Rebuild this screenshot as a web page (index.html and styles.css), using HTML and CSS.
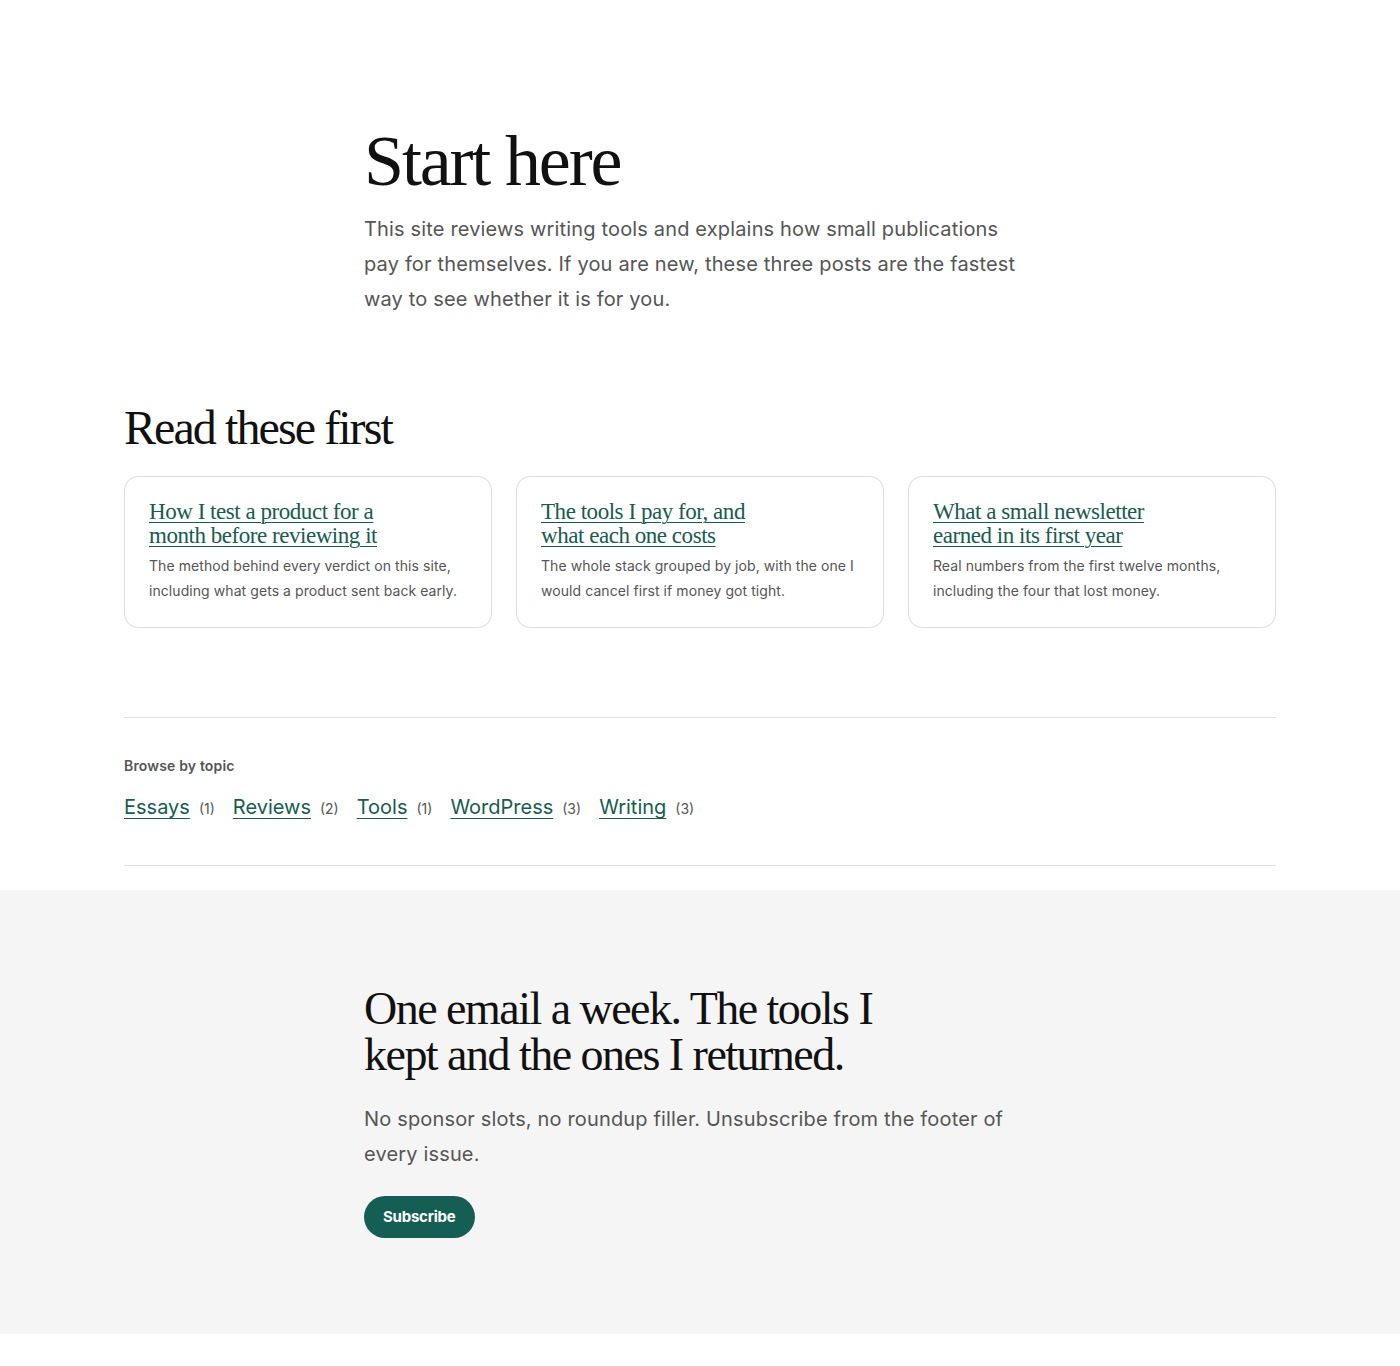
FILE: index.html
```html
<!DOCTYPE html>
<html lang="en">
<head>
<meta charset="utf-8">
<title>Start here</title>
<link rel="stylesheet" href="styles.css">
</head>
<body>
<main>
  <section class="hero">
    <h1 class="hero-title">Start here</h1>
    <p class="lead">This site reviews writing tools and explains how small publications pay for themselves. If you are new, these three posts are the fastest way to see whether it is for you.</p>
  </section>

  <section class="first">
    <h2 class="section-title">Read these first</h2>
    <div class="cards">
      <article class="card">
        <h3 class="card-title"><a href="#">How I test a product for a month before reviewing it</a></h3>
        <p class="card-text">The method behind every verdict on this site, including what gets a product sent back early.</p>
      </article>
      <article class="card">
        <h3 class="card-title"><a href="#">The tools I pay for, and what each one costs</a></h3>
        <p class="card-text">The whole stack grouped by job, with the one I would cancel first if money got tight.</p>
      </article>
      <article class="card">
        <h3 class="card-title"><a href="#">What a small newsletter earned in its first year</a></h3>
        <p class="card-text">Real numbers from the first twelve months, including the four that lost money.</p>
      </article>
    </div>
  </section>

  <section class="topics">
    <h2 class="topics-label">Browse by topic</h2>
    <ul class="topic-list">
      <li><a href="#">Essays</a><span class="count">(1)</span></li>
      <li><a href="#">Reviews</a><span class="count">(2)</span></li>
      <li><a href="#">Tools</a><span class="count">(1)</span></li>
      <li><a href="#">WordPress</a><span class="count">(3)</span></li>
      <li><a href="#">Writing</a><span class="count">(3)</span></li>
    </ul>
  </section>

  <section class="newsletter">
    <div class="newsletter-inner">
      <h2 class="newsletter-title">One email a week. The tools I kept and the ones I returned.</h2>
      <p class="lead">No sponsor slots, no roundup filler. Unsubscribe from the footer of every issue.</p>
      <a class="button" href="#">Subscribe</a>
    </div>
  </section>
</main>
</body>
</html>
```

FILE: styles.css
```css
* { box-sizing: border-box; }

html, body {
  margin: 0;
  padding: 0;
  background: #ffffff;
}

body {
  font-family: Inter, "Noto Sans", "Liberation Sans", sans-serif;
  color: #111111;
  letter-spacing: 0.01em;
  padding-bottom: 32px;
}

a { color: #175c4f; }

.hero {
  width: 672px;
  margin: 0 auto;
  padding-top: 121px;
}

.hero-title {
  font-family: "Liberation Serif", "DejaVu Serif", serif;
  font-weight: 400;
  font-size: 72px;
  line-height: 80px;
  letter-spacing: -0.03em;
  margin: 0 0 11px;
  color: #111111;
}

.lead {
  font-size: 20px;
  line-height: 35px;
  color: #555555;
  margin: 0;
}

.first {
  width: 1152px;
  margin: 0 auto;
  padding-top: 87px;
}

.section-title {
  font-family: "Liberation Serif", "DejaVu Serif", serif;
  font-weight: 400;
  font-size: 48px;
  line-height: 48px;
  letter-spacing: -0.04em;
  margin: 0 0 24px;
  color: #111111;
}

.cards {
  display: grid;
  grid-template-columns: repeat(3, 1fr);
  gap: 24px;
}

.card {
  border: 1px solid #dcdcdc;
  border-radius: 14px;
  padding: 23px 24px 24px;
}

.card-title {
  font-family: "Liberation Serif", "DejaVu Serif", serif;
  font-weight: 400;
  font-size: 23px;
  line-height: 24px;
  letter-spacing: -0.02em;
  margin: 0 0 5px;
  max-width: 250px;
  text-wrap: balance;
}

.card-title a {
  text-decoration-thickness: 1px;
  text-underline-offset: 3px;
}

.card-text {
  font-size: 14px;
  line-height: 25px;
  letter-spacing: 0.005em;
  color: #555555;
  margin: 0;
}

.topics {
  width: 1152px;
  margin: 89px auto 0;
  border-top: 1px solid #e2e2e2;
  border-bottom: 1px solid #e2e2e2;
  padding: 38px 0 43px;
}

.topics-label {
  font-size: 14px;
  line-height: 20px;
  font-weight: 600;
  color: #555555;
  margin: 0 0 16px;
}

.topic-list {
  list-style: none;
  margin: 0;
  padding: 0;
  display: flex;
  flex-wrap: wrap;
  gap: 18px;
  align-items: baseline;
  letter-spacing: 0;
}

.topic-list li {
  display: flex;
  align-items: baseline;
  gap: 9px;
}

.topic-list a {
  font-size: 20px;
  line-height: 30px;
  text-decoration-thickness: 1px;
  text-underline-offset: 4px;
}

.count {
  font-size: 14px;
  color: #555555;
}

.newsletter {
  margin-top: 24px;
  background: #f5f5f5;
  padding: 96px 0 96px;
}

.newsletter-inner {
  width: 672px;
  margin: 0 auto;
}

.newsletter-title {
  font-family: "Liberation Serif", "DejaVu Serif", serif;
  font-weight: 400;
  font-size: 46px;
  line-height: 46px;
  letter-spacing: -0.033em;
  margin: 0 0 24px;
  max-width: 540px;
  color: #111111;
}

.newsletter .lead {
  margin-bottom: 24px;
}

.button {
  display: inline-block;
  background: #145e54;
  color: #ffffff;
  text-decoration: none;
  font-size: 15px;
  font-weight: 700;
  letter-spacing: -0.015em;
  line-height: 42px;
  padding: 0 19px;
  border-radius: 21px;
}
```
